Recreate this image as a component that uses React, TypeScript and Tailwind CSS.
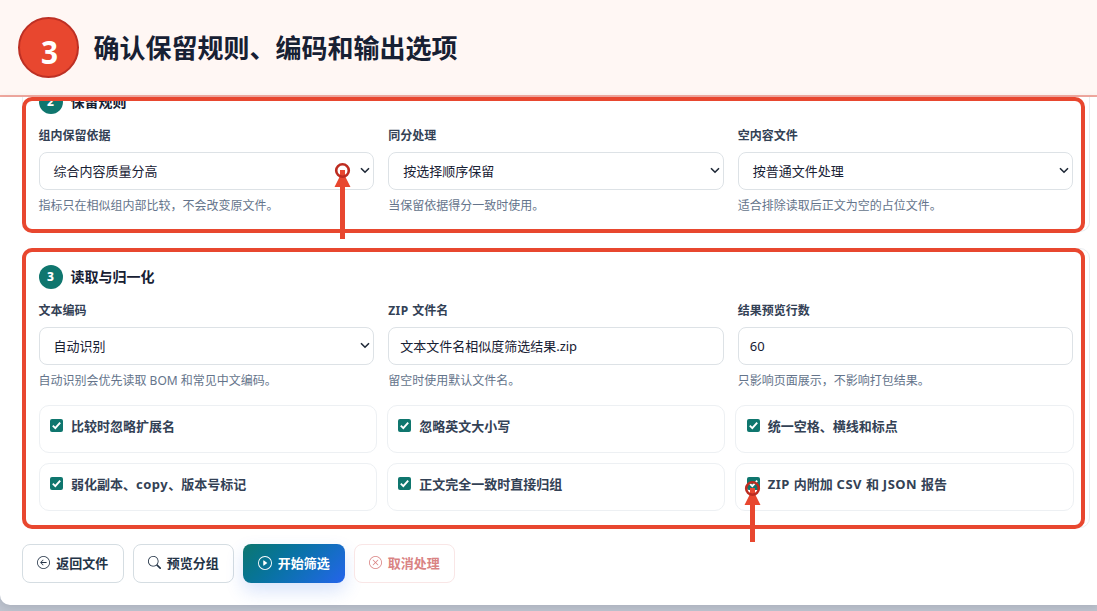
import type { ReactNode } from "react";
import { BsArrowLeftCircle, BsPlayCircle, BsSearch, BsXCircle } from "react-icons/bs";

function StepBadge({ n }: { n: number }) {
  return (
    <span className="flex size-6 items-center justify-center rounded-full bg-[#0f766e] text-[12px] leading-none font-extrabold text-white">
      {n}
    </span>
  );
}

function SectionTitle({ n, children }: { n: number; children: ReactNode }) {
  return (
    <div className="flex h-6 shrink-0 items-center gap-2">
      <StepBadge n={n} />
      <h2 className="text-[14px] leading-5 font-bold whitespace-nowrap text-[#172033]">{children}</h2>
    </div>
  );
}

function Latin({ children }: { children: ReactNode }) {
  return <span className="tracking-[0.5px]">{children}</span>;
}

type FieldProps = { label: ReactNode; value: string; help: string; select?: boolean };

function Field({ label, value, help, select = false }: FieldProps) {
  return (
    <div className="flex flex-col">
      <span className="h-[18px] text-[12px] leading-[18px] font-bold text-[#334155]">{label}</span>
      <div
        className={`mt-[7px] flex h-[38px] items-center justify-between rounded-lg border border-[#dde2e6] bg-white pr-[3px] text-[13px] leading-5 text-[#172033] ${select ? "pl-[14px]" : "pl-[11px]"}`}
      >
        <span className="-mt-px">{value}</span>
        {select && (
          <svg className="-mt-px" width="10" height="7" viewBox="0 0 10 7" fill="none" stroke="#1f2937" strokeWidth="1.6">
            <path d="M1 1.2 5 5.2 9 1.2" />
          </svg>
        )}
      </div>
      <span className="mt-[7px] h-[18px] text-[12px] leading-[18px] text-[#64748b]">{help}</span>
    </div>
  );
}

function Check({ children }: { children: ReactNode }) {
  return (
    <div className="flex h-12 items-start gap-2 rounded-[10px] border border-[#edf0f3] bg-white px-[10.5px] pt-[10px]">
      <svg className="mt-[3px] size-[13px] shrink-0" viewBox="0 0 13 13">
        <rect width="13" height="13" rx="2" fill="#0f766e" />
        <path d="M2.8 6.7 5.3 9.2 10.2 3.6" fill="none" stroke="#fff" strokeWidth="1.9" />
      </svg>
      <span className="text-[13px] leading-5 font-bold text-[#334155]">{children}</span>
    </div>
  );
}

function Frame({ className }: { className: string }) {
  return <div className={`pointer-events-none absolute w-[1063px] rounded-[10px] border-4 border-[#e8472f] ${className}`} />;
}

function Pointer({ length, className }: { length: number; className: string }) {
  return (
    <svg className={`pointer-events-none absolute ${className}`} width="17" height={length} viewBox={`0 0 17 ${length}`}>
      <path d={`M6 8h5v6l5.5 11H11V${length}H6V25H.5L6 14z`} fill="#e8472f" />
      <circle cx="8.5" cy="8.5" r="6.3" fill="none" stroke="#bd2c20" strokeWidth="2.6" />
    </svg>
  );
}

export default function App() {
  return (
    <div className="h-[611px] w-[1097px] overflow-hidden bg-[#bec4cf] font-['Noto_Sans','Noto_Sans_CJK_SC',sans-serif]">
      <header className="flex h-[97px] items-start gap-[14.5px] border-b-2 border-[#f3aaa0] bg-[#fff7f4] pt-[17px] pl-[18px]">
        <div className="flex size-[61px] items-center justify-center rounded-full border-2 border-[#bd3024] bg-[#e8472f] pt-2 pl-px text-[33px] leading-none font-bold text-white">
          <span className="scale-x-90">3</span>
        </div>
        <h1 className="pt-[12px] text-[26px] leading-[38px] font-bold text-[#172033]">确认保留规则、编码和输出选项</h1>
      </header>

      <main className="h-[508px] rounded-bl-[10px] bg-white pl-[22px] shadow-[0_2px_8px_rgba(15,23,42,0.12)]">
        <section className="relative h-[135px] w-[1068px]">
          <div className="flex h-full flex-col justify-end overflow-hidden rounded-b-[10px] border border-t-0 border-[#e9edf0] px-[15.5px] pb-4">
            <SectionTitle n={2}>保留规则</SectionTitle>
            <div className="mt-[13px] grid shrink-0 grid-cols-3 gap-[14px]">
              <Field select label="组内保留依据" value="综合内容质量分高" help="指标只在相似组内部比较，不会改变原文件。" />
              <Field select label="同分处理" value="按选择顺序保留" help="当保留依据得分一致时使用。" />
              <Field select label="空内容文件" value="按普通文件处理" help="适合排除读取后正文为空的占位文件。" />
            </div>
          </div>
          <Frame className="top-0 left-0 h-[136px]" />
          <Pointer length={77} className="top-[65px] left-[312px]" />
        </section>

        <section className="relative mt-4 h-[280px] w-[1068px] rounded-[10px] border border-[#e9edf0] px-[15.5px] pt-4">
          <SectionTitle n={3}>读取与归一化</SectionTitle>
          <div className="mt-[13px] grid grid-cols-3 gap-[14px]">
            <Field select label="文本编码" value="自动识别" help="自动识别会优先读取 BOM 和常见中文编码。" />
            <Field label={<><Latin>ZIP </Latin>文件名</>} value="文本文件名相似度筛选结果.zip" help="留空时使用默认文件名。" />
            <Field label="结果预览行数" value="60" help="只影响页面展示，不影响打包结果。" />
          </div>
          <div className="mt-[15px] grid grid-cols-3 gap-[10px]">
            <Check>比较时忽略扩展名</Check>
            <Check>忽略英文大小写</Check>
            <Check>统一空格、横线和标点</Check>
            <Check>弱化副本、<Latin>copy</Latin>、版本号标记</Check>
            <Check>正文完全一致时直接归组</Check>
            <Check>
              <Latin>ZIP </Latin>内附加<Latin> CSV </Latin>和<Latin> JSON </Latin>报告
            </Check>
          </div>
          <Frame className="-top-px -left-px h-[281px]" />
          <Pointer length={62} className="top-[231px] left-[721px]" />
        </section>

        <div className="mt-4 flex gap-[9px] text-[13px] leading-5 font-bold">
          <button className="flex h-[39px] w-[101.5px] items-center justify-center gap-1.5 rounded-lg border border-[#d5dde2] bg-white pb-0.5 text-[#243447]">
            <BsArrowLeftCircle size={13} />
            返回文件
          </button>
          <button className="flex h-[39px] w-[101.5px] items-center justify-center gap-1.5 rounded-lg border border-[#d5dde2] bg-white pb-0.5 text-[#243447]">
            <BsSearch size={13} />
            预览分组
          </button>
          <button className="flex h-[39px] w-[101.5px] items-center justify-center gap-1.5 rounded-lg bg-linear-135 from-[#0f766e] to-[#2563eb] pb-0.5 text-white shadow-[0_8px_18px_rgba(37,99,235,0.18)]">
            <BsPlayCircle size={14} />
            开始筛选
          </button>
          <button className="flex h-[39px] w-[101.5px] items-center justify-center gap-1.5 rounded-lg border border-[#f9e6e6] bg-white pb-0.5 text-[#d98383]">
            <BsXCircle size={13} />
            取消处理
          </button>
        </div>
      </main>
    </div>
  );
}
